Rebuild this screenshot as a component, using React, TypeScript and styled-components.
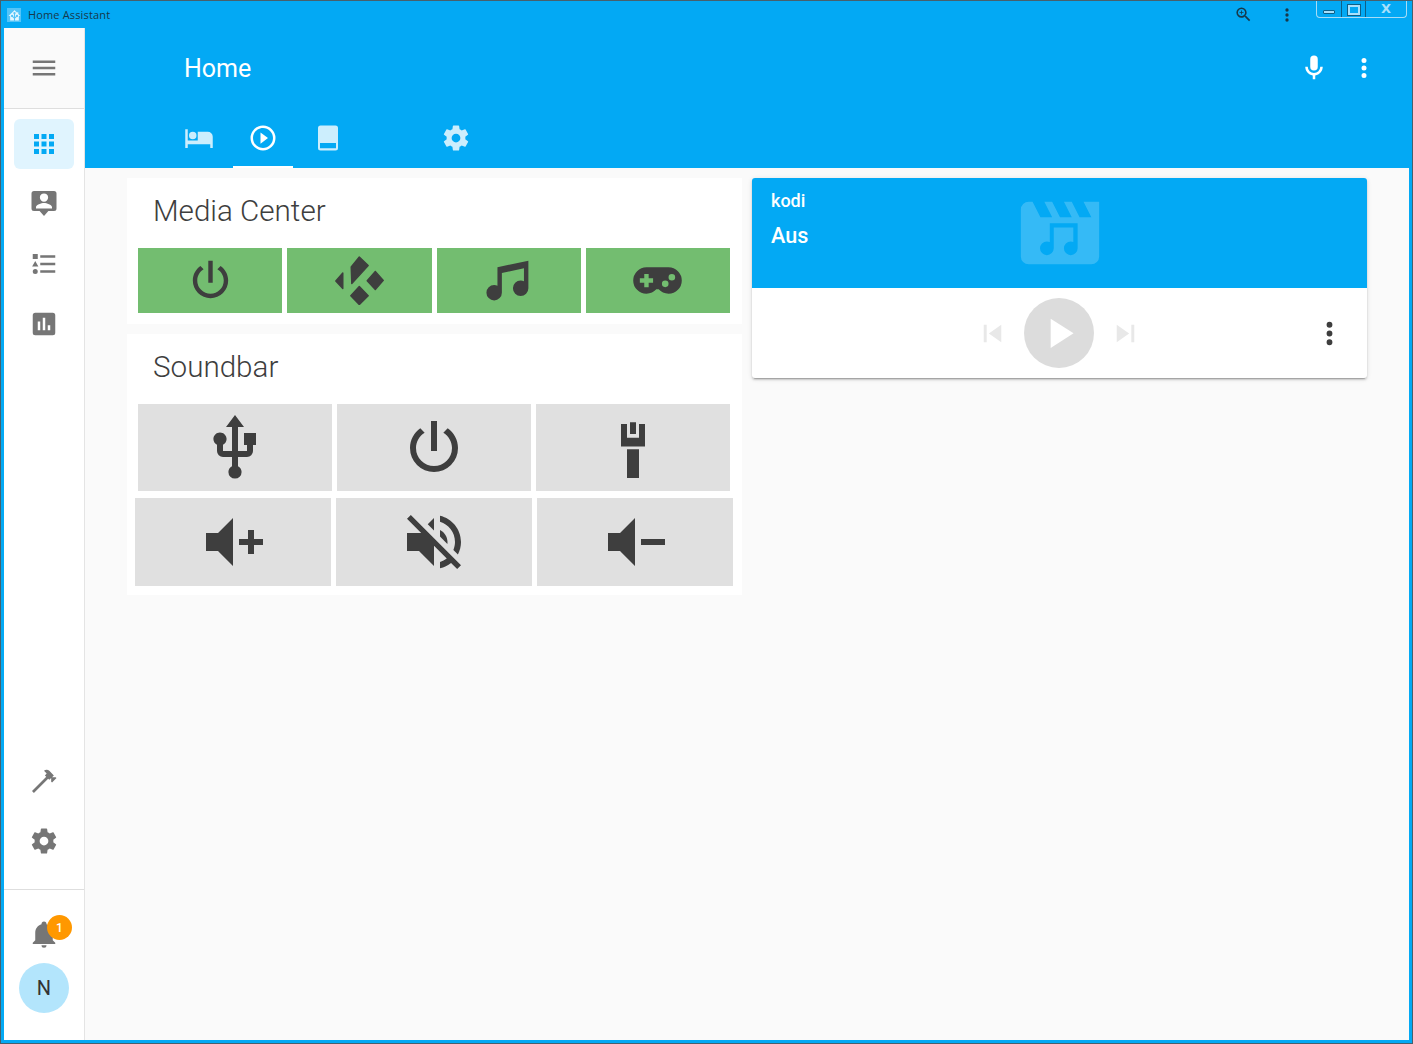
import React from "react";
import styled, { createGlobalStyle } from "styled-components";

const BLUE = "#03a9f4";
const SIDE_ICON = "#767676";

const mdi = {
  menu: "M3,6H21V8H3V6M3,11H21V13H3V11M3,16H21V18H3V16Z",
  apps: "M16,20H20V16H16M16,14H20V10H16M10,8H14V4H10M16,8H20V4H16M10,14H14V10H10M4,14H8V10H4M4,20H8V16H4M10,20H14V16H10M4,8H8V4H4V8Z",
  logbook:
    "M20,1.5H4A2,2 0 0,0 2,3.5V15.5A2,2 0 0,0 4,17.5H8.5L12,21.6L15.5,17.5H20A2,2 0 0,0 22,15.5V3.5A2,2 0 0,0 20,1.5Z M12,3.5A3.3,3.3 0 0 1 15.3,6.8A3.3,3.3 0 0 1 12,10.1A3.3,3.3 0 0 1 8.7,6.8A3.3,3.3 0 0 1 12,3.5Z M5.6,15.5V14.5C5.6,12.4 9.9,11.1 12,11.1C14.1,11.1 18.4,12.4 18.4,14.5V15.5Z",
  listType:
    "M5,9.5L7.5,14H2.5L5,9.5M3,4H7V8H3V4M5,20A2,2 0 0,0 7,18A2,2 0 0,0 5,16A2,2 0 0,0 3,18A2,2 0 0,0 5,20M9,5V7H21V5H9M9,19H21V17H9V19M9,13H21V11H9V13Z",
  chartBox:
    "M19,3H5A2,2 0 0,0 3,5V19A2,2 0 0,0 5,21H19A2,2 0 0,0 21,19V5A2,2 0 0,0 19,3M9,17H7V10H9V17M13,17H11V7H13V17M17,17H15V13H17V17Z",
  hammer:
    "M2.4,20L13.8,8.6L12.72,7.5L14.14,6.07L12,3.89C13.2,2.7 15.09,2.7 16.27,3.89L19.87,7.5L18.45,8.91H21.29L22,9.62L18.45,13.21L17.74,12.5V9.62L16.27,11.04L15.3,10.1L3.9,21.5Z",
  cog: "M12,15.5A3.5,3.5 0 0,1 8.5,12A3.5,3.5 0 0,1 12,8.5A3.5,3.5 0 0,1 15.5,12A3.5,3.5 0 0,1 12,15.5M19.43,12.97C19.47,12.65 19.5,12.33 19.5,12C19.5,11.67 19.47,11.34 19.43,11L21.54,9.37C21.73,9.22 21.78,8.95 21.66,8.73L19.66,5.27C19.54,5.05 19.27,4.96 19.05,5.05L16.56,6.05C16.04,5.66 15.5,5.32 14.87,5.07L14.5,2.42C14.46,2.18 14.25,2 14,2H10C9.75,2 9.54,2.18 9.5,2.42L9.13,5.07C8.5,5.32 7.96,5.66 7.44,6.05L4.95,5.05C4.73,4.96 4.46,5.05 4.34,5.27L2.34,8.73C2.21,8.95 2.27,9.22 2.46,9.37L4.57,11C4.53,11.34 4.5,11.67 4.5,12C4.5,12.33 4.53,12.65 4.57,12.97L2.46,14.63C2.27,14.78 2.21,15.05 2.34,15.27L4.34,18.73C4.46,18.95 4.73,19.03 4.95,18.95L7.44,17.94C7.96,18.34 8.5,18.68 9.13,18.93L9.5,21.58C9.54,21.82 9.75,22 10,22H14C14.25,22 14.46,21.82 14.5,21.58L14.87,18.93C15.5,18.67 16.04,18.34 16.56,17.94L19.05,18.95C19.27,19.03 19.54,18.95 19.66,18.73L21.66,15.27C21.78,15.05 21.73,14.78 21.54,14.63L19.43,12.97Z",
  bell: "M21,19V20H3V19L5,17V11C5,7.9 7.03,5.17 10,4.29C10,4.19 10,4.1 10,4A2,2 0 0,1 12,2A2,2 0 0,1 14,4C14,4.1 14,4.19 14,4.29C16.97,5.17 19,7.9 19,11V17L21,19M14,21A2,2 0 0,1 12,23A2,2 0 0,1 10,21",
  mic: "M12,2A3,3 0 0,1 15,5V11A3,3 0 0,1 12,14A3,3 0 0,1 9,11V5A3,3 0 0,1 12,2M19,11C19,14.53 16.39,17.44 13,17.93V21H11V17.93C7.61,17.44 5,14.53 5,11H7A5,5 0 0,0 12,16A5,5 0 0,0 17,11H19Z",
  dots: "M12,16A2,2 0 0,1 14,18A2,2 0 0,1 12,20A2,2 0 0,1 10,18A2,2 0 0,1 12,16M12,10A2,2 0 0,1 14,12A2,2 0 0,1 12,14A2,2 0 0,1 10,12A2,2 0 0,1 12,10M12,4A2,2 0 0,1 14,6A2,2 0 0,1 12,8A2,2 0 0,1 10,6A2,2 0 0,1 12,4Z",
  bed: "M19,7H11V14H3V5H1V20H3V17H21V20H23V11A4,4 0 0,0 19,7M7,13A3,3 0 0,0 10,10A3,3 0 0,0 7,7A3,3 0 0,0 4,10A3,3 0 0,0 7,13Z",
  playCircle:
    "M10,16.5L16,12L10,7.5V16.5M12,2A10,10 0 0,0 2,12A10,10 0 0,0 12,22A10,10 0 0,0 22,12A10,10 0 0,0 12,2M12,20C7.59,20 4,16.41 4,12C4,7.59 7.59,4 12,4C16.41,4 20,7.59 20,12C20,16.41 16.41,20 12,20Z",
  book: "M6,2H18A2,2 0 0,1 20,4V20A2,2 0 0,1 18,22H6A2,2 0 0,1 4,20V4A2,2 0 0,1 6,2Z M5.6,16V20.2H18.4V16Z",
  power:
    "M16.56,5.44L15.11,6.89C16.84,7.94 18,9.83 18,12A6,6 0 0,1 12,18A6,6 0 0,1 6,12C6,9.83 7.16,7.94 8.88,6.88L7.44,5.44C5.36,6.88 4,9.28 4,12A8,8 0 0,0 12,20A8,8 0 0,0 20,12C20,9.28 18.64,6.88 16.56,5.44M13,3H11V13H13",
  music:
    "M21,3V15.5A3.5,3.5 0 0,1 17.5,19A3.5,3.5 0 0,1 14,15.5A3.5,3.5 0 0,1 17.5,12C18.04,12 18.55,12.12 19,12.34V6.47L9,8.6V17.5A3.5,3.5 0 0,1 5.5,21A3.5,3.5 0 0,1 2,17.5A3.5,3.5 0 0,1 5.5,14C6.04,14 6.55,14.12 7,14.34V6L21,3Z",
  controller:
    "M7,6H17A6,6 0 0,1 23,12A6,6 0 0,1 17,18C15.22,18 13.63,17.23 12.53,16H11.47C10.37,17.23 8.78,18 7,18A6,6 0 0,1 1,12A6,6 0 0,1 7,6M6,9V11H4V13H6V15H8V13H10V11H8V9H6M15.5,12A1.5,1.5 0 0,0 14,13.5A1.5,1.5 0 0,0 15.5,15A1.5,1.5 0 0,0 17,13.5A1.5,1.5 0 0,0 15.5,12M18.5,9A1.5,1.5 0 0,0 17,10.5A1.5,1.5 0 0,0 18.5,12A1.5,1.5 0 0,0 20,10.5A1.5,1.5 0 0,0 18.5,9Z",
  usb: "M15,7V11H16V13H13V5H15L12,1L9,5H11V13H8V10.93C8.7,10.56 9.2,9.85 9.2,9C9.2,7.78 8.21,6.8 7,6.8C5.78,6.8 4.8,7.78 4.8,9C4.8,9.85 5.3,10.59 6,10.93V13A2,2 0 0,0 8,15H11V18.05C10.29,18.41 9.8,19.15 9.8,20A2.2,2.2 0 0,0 12,22.2A2.2,2.2 0 0,0 14.2,20C14.2,19.15 13.71,18.41 13,18.05V15H16A2,2 0 0,0 18,13V11H19V7H15Z",
  hdmi: "M11,3.4H13V7.3H11Z M8,4H10V8.6H14V4H16V11.5H8Z M10,12.4H14V22H10Z",
  volumePlus: "M3,9H7L12,4V20L7,15H3V9M14,11H17V8H19V11H22V13H19V16H17V13H14V11Z",
  volumeMinus: "M3,9H7L12,4V20L7,15H3V9M14,11H22V13H14V11Z",
  volumeOff:
    "M12,4L9.91,6.09L12,8.18M4.27,3L3,4.27L7.73,9H3V15H7L12,20V13.27L16.25,17.53C15.58,18.04 14.83,18.46 14,18.7V20.77C15.38,20.45 16.63,19.82 17.68,18.96L19.73,21L21,19.73L12,10.73M19,12C19,12.94 18.8,13.82 18.46,14.64L19.97,16.15C20.62,14.91 21,13.5 21,12C21,7.72 18,4.14 14,3.23V5.29C16.89,6.15 19,8.83 19,12M16.5,12C16.5,10.23 15.5,8.71 14,7.97V10.18L16.45,12.63C16.5,12.43 16.5,12.21 16.5,12Z",
  play: "M8,5.14V19.14L19,12.14L8,5.14Z",
  prev: "M6,18V6H8V18H6M9.5,12L18,6V18L9.5,12Z",
  next: "M16,18H18V6H16M6,18L14.5,12L6,6V18Z",
  zoom: "M15.5,14L20.5,19L19,20.5L14,15.5V14.71L13.73,14.43C12.59,15.41 11.11,16 9.5,16A6.5,6.5 0 0,1 3,9.5A6.5,6.5 0 0,1 9.5,3A6.5,6.5 0 0,1 16,9.5C16,11.11 15.41,12.59 14.43,13.73L14.71,14H15.5M9.5,14C12,14 14,12 14,9.5C14,7 12,5 9.5,5C7,5 5,7 5,9.5C5,12 7,14 9.5,14M12,10H10V12H9V10H7V9H9V7H10V9H12V10Z",
  homeAssistant:
    "M21.8,13H20V21H13V17.67L15.79,14.88L16.5,15C17.66,15 18.6,14.06 18.6,12.9C18.6,11.74 17.66,10.8 16.5,10.8A2.1,2.1 0 0,0 14.4,12.9L14.5,13.61L13,15.13V9.65C13.66,9.29 14.1,8.6 14.1,7.8A2.1,2.1 0 0,0 12,5.7A2.1,2.1 0 0,0 9.9,7.8C9.9,8.6 10.34,9.29 11,9.65V15.13L9.5,13.61L9.6,12.9A2.1,2.1 0 0,0 7.5,10.8A2.1,2.1 0 0,0 5.4,12.9A2.1,2.1 0 0,0 7.5,15L8.21,14.88L11,17.67V21H4V13H2.25C1.83,13 1.42,13 1.42,12.79C1.43,12.57 1.85,12.15 2.28,11.72L11,3C11.33,2.67 11.67,2.33 12,2.33C12.33,2.33 12.67,2.67 13,3L17,7V6H19V9L21.78,11.78C22.18,12.18 22.59,12.59 22.6,12.8C22.6,13 22.2,13 21.8,13Z",
  movieMusic:
    "M18,4L20,8H17L15,4H13L15,8H12L10,4H8L10,8H7L5,4H4A2,2 0 0,0 2,6V18A2,2 0 0,0 4,20H20A2,2 0 0,0 22,18V4H18Z M9.4,9.5H16.5V15.9A1.75,1.75 0 0 1 13,15.9A1.75,1.75 0 0 1 14.75,14.15L15.4,14.3V10.6H10.4V15.9A1.75,1.75 0 0 1 6.9,15.9A1.75,1.75 0 0 1 8.65,14.15L9.4,14.3Z",
};

const GlobalStyle = createGlobalStyle`
  html, body {
    margin: 0;
    padding: 0;
    height: 100%;
    overflow: hidden;
  }
  body {
    font-family: Roboto, "Noto Sans", sans-serif;
    color: #212121;
  }
  * {
    box-sizing: border-box;
  }
`;

const Svg = styled.svg<{ $size: number; $color?: string }>`
  display: block;
  flex: none;
  width: ${(p) => p.$size}px;
  height: ${(p) => p.$size}px;
  fill: ${(p) => p.$color || "currentColor"};
`;

const Icon: React.FC<{ d: string; size: number; color?: string }> = ({
  d,
  size,
  color,
}) => (
  <Svg viewBox="0 0 24 24" $size={size} $color={color}>
    <path d={d} fillRule="evenodd" />
  </Svg>
);

const KodiIcon: React.FC = () => (
  <Svg viewBox="0 0 49 49" $size={49}>
    <g stroke="currentColor" strokeWidth="1.4" strokeLinejoin="round">
      <polygon points="16.2,11 24.3,1 33.2,9.6 16.8,27.6" />
      <polygon points="7.8,17 0.8,25 7.8,32.6" />
      <polygon points="40.3,15.4 48.3,24.4 40.3,33.6 32.2,24.7" />
      <polygon points="24.3,30.4 33.2,39.7 24.3,48.6 15.8,39.7" />
    </g>
  </Svg>
);

const Window = styled.div`
  display: flex;
  flex-direction: column;
  width: 1413px;
  height: 1044px;
  padding: 0 3px 3px;
  background: ${BLUE};
  border: 1px solid #47606c;
`;

const TitleBar = styled.div`
  display: flex;
  align-items: center;
  flex: none;
  height: 27px;
  padding: 0 2px 0 3px;
`;

const AppBadge = styled.div`
  display: flex;
  align-items: center;
  justify-content: center;
  width: 14px;
  height: 14px;
  margin-top: 1px;
  background: #53c4f8;
  color: #e6f7ff;
`;

const AppName = styled.span`
  margin-left: 7px;
  font-family: "Open Sans", sans-serif;
  font-size: 11px;
  letter-spacing: 0.15px;
  color: #17384a;
`;

const TitleTools = styled.div`
  display: flex;
  align-items: center;
  gap: 24px;
  margin-left: auto;
  color: #17384a;
`;

const WindowButtons = styled.div`
  display: flex;
  align-self: flex-start;
  height: 17px;
  margin-left: 19px;
  border: 1px solid #a6dcf6;
  border-top: none;
  border-radius: 0 0 4px 4px;
`;

const WindowButton = styled.div<{ $width: number }>`
  display: flex;
  align-items: center;
  justify-content: center;
  width: ${(p) => p.$width}px;
  & + & {
    border-left: 1px solid #0f5f86;
  }
`;

const MinGlyph = styled.div`
  width: 12px;
  height: 4px;
  margin-top: 6px;
  background: #a8e0fb;
  border: 1px solid #0f5f86;
  border-radius: 1px;
`;

const RestoreGlyph = styled.div`
  width: 12px;
  height: 10px;
  margin-top: 1px;
  background: #03a9f4;
  border: 2px solid #a8e0fb;
  outline: 1px solid #0f5f86;
`;

const CloseGlyph = styled.span`
  font-family: "DejaVu Sans", sans-serif;
  font-size: 13px;
  font-weight: 700;
  line-height: 14px;
  color: #a8e0fb;
`;

const Body = styled.div`
  display: flex;
  flex: 1;
  min-height: 0;
`;

const Sidebar = styled.aside`
  display: flex;
  flex-direction: column;
  flex: none;
  width: 81px;
  background: #fff;
  border-right: 1px solid #e4e4e4;
`;

const SidebarTop = styled.div`
  display: flex;
  align-items: center;
  justify-content: center;
  flex: none;
  height: 81px;
  background: #fafafa;
  border-bottom: 1px solid #dedede;
  color: ${SIDE_ICON};
`;

const Nav = styled.nav`
  display: flex;
  flex-direction: column;
  flex: 1;
  gap: 10px;
  padding: 10px 10px 0;
`;

const NavItem = styled.div<{ $active?: boolean }>`
  display: flex;
  align-items: center;
  justify-content: center;
  height: 50px;
  border-radius: 6px;
  color: ${(p) => (p.$active ? BLUE : SIDE_ICON)};
  background: ${(p) => (p.$active ? "#e0f4fe" : "transparent")};
`;

const Tools = styled.div`
  display: flex;
  flex-direction: column;
  gap: 10px;
  padding: 0 10px 23px;
`;

const UserArea = styled.div`
  display: flex;
  flex-direction: column;
  align-items: center;
  flex: none;
  height: 151px;
  padding-top: 19px;
  gap: 4px;
  border-top: 1px solid #dedede;
`;

const BellItem = styled.div`
  position: relative;
  display: flex;
  align-items: center;
  justify-content: center;
  width: 60px;
  height: 50px;
  color: ${SIDE_ICON};
`;

const Badge = styled.div`
  position: absolute;
  left: 33px;
  top: 6px;
  display: flex;
  align-items: center;
  justify-content: center;
  width: 25px;
  height: 25px;
  border-radius: 50%;
  background: #ff9800;
  color: #fff;
  font-size: 12px;
  font-weight: 500;
`;

const Avatar = styled.div`
  display: flex;
  align-items: center;
  justify-content: center;
  width: 50px;
  height: 50px;
  border-radius: 50%;
  background: #b3e5fc;
  color: #333;
  font-size: 20px;
`;

const Main = styled.main`
  display: flex;
  flex-direction: column;
  flex: 1;
  min-width: 0;
  background: #fafafa;
`;

const Header = styled.header`
  flex: none;
  height: 140px;
  background: ${BLUE};
  color: #fff;
`;

const Toolbar = styled.div`
  display: flex;
  align-items: center;
  height: 80px;
  padding: 0 20px 0 99px;
`;

const Title = styled.h1`
  flex: 1;
  margin: 0;
  font-size: 25px;
  font-weight: 400;
`;

const HeaderButton = styled.div`
  display: flex;
  align-items: center;
  justify-content: center;
  width: 50px;
  height: 50px;
`;

const Tabs = styled.div`
  display: flex;
  gap: 4.33px;
  height: 60px;
  padding-left: 84px;
`;

const Tab = styled.div<{ $active?: boolean }>`
  display: flex;
  align-items: center;
  justify-content: center;
  width: 60px;
  border-bottom: 2px solid ${(p) => (p.$active ? "#fff" : "transparent")};
  padding-top: 2px;
  color: ${(p) => (p.$active ? "#fff" : "rgba(255, 255, 255, 0.8)")};
`;

const Content = styled.div`
  display: grid;
  grid-template-columns: 615px 615px;
  align-items: start;
  gap: 10px;
  padding: 10px 42px 0;
`;

const Column = styled.div`
  display: flex;
  flex-direction: column;
  gap: 10px;
`;

const Card = styled.section`
  padding: 0 12px 0 11px;
  background: #fff;
`;

const CardTitle = styled.h2`
  display: flex;
  align-items: center;
  height: 70px;
  margin: 0;
  padding: 0 0 4px 15px;
  font-size: 29.6px;
  font-weight: 300;
  color: #3e3e3e;
`;

const ButtonRow = styled.div<{ $bleed?: boolean; $bottom?: number }>`
  display: flex;
  gap: 5px;
  margin: ${(p) => (p.$bleed ? "0 -3px" : "0")};
  padding-bottom: ${(p) => p.$bottom ?? 0}px;
  & + & {
    margin-top: 7px;
  }
`;

const SwitchButton = styled.div<{ $on?: boolean; $height: number }>`
  display: flex;
  align-items: center;
  justify-content: center;
  flex: 1 1 0;
  height: ${(p) => p.$height}px;
  background: ${(p) => (p.$on ? "#73bd70" : "#e0e0e0")};
  color: #3e3e3e;
`;

const Player = styled.section`
  overflow: hidden;
  background: #fff;
  border-radius: 3px;
  box-shadow: 0 2px 2px rgba(0, 0, 0, 0.14), 0 1px 5px rgba(0, 0, 0, 0.12),
    0 3px 1px -2px rgba(0, 0, 0, 0.2);
`;

const PlayerHead = styled.div`
  position: relative;
  height: 110px;
  padding: 11px 19px 0;
  background: ${BLUE};
  color: #fff;
`;

const PlayerArt = styled.div`
  position: absolute;
  inset: 0;
  display: flex;
  align-items: center;
  justify-content: center;
`;

const PlayerName = styled.div`
  position: relative;
  font-size: 18px;
  font-weight: 500;
  line-height: 24px;
`;

const PlayerState = styled.div`
  position: relative;
  margin-top: 11px;
  font-size: 21.6px;
  font-weight: 500;
  line-height: 24px;
`;

const PlayerControls = styled.div`
  display: grid;
  grid-template-columns: 1fr auto 1fr;
  align-items: center;
  height: 90px;
`;

const Transport = styled.div`
  display: flex;
  align-items: center;
  gap: 14px;
  grid-column: 2;
  margin-left: -1px;
  color: #e8e8e8;
`;

const PlayButton = styled.div`
  display: flex;
  align-items: center;
  justify-content: center;
  width: 70px;
  height: 70px;
  border-radius: 50%;
  background: #dcdcdc;
  color: #fff;
`;

const MoreButton = styled.div`
  justify-self: end;
  margin-right: 20px;
  color: #3e3e3e;
`;

const navItems = [mdi.apps, mdi.logbook, mdi.listType, mdi.chartBox];
const tabs = [mdi.bed, mdi.playCircle, mdi.book, "", mdi.cog];

export default function App() {
  return (
    <>
      <GlobalStyle />
      <Window>
        <TitleBar>
          <AppBadge>
            <Icon d={mdi.homeAssistant} size={13} />
          </AppBadge>
          <AppName>Home Assistant</AppName>
          <TitleTools>
            <Icon d={mdi.zoom} size={19} />
            <Icon d={mdi.dots} size={20} />
          </TitleTools>
          <WindowButtons>
            <WindowButton $width={24}>
              <MinGlyph />
            </WindowButton>
            <WindowButton $width={24}>
              <RestoreGlyph />
            </WindowButton>
            <WindowButton $width={41}>
              <CloseGlyph>X</CloseGlyph>
            </WindowButton>
          </WindowButtons>
        </TitleBar>
        <Body>
          <Sidebar>
            <SidebarTop>
              <Icon d={mdi.menu} size={30} />
            </SidebarTop>
            <Nav>
              {navItems.map((d, i) => (
                <NavItem key={d} $active={i === 0}>
                  <Icon d={d} size={30} />
                </NavItem>
              ))}
            </Nav>
            <Tools>
              <NavItem>
                <Icon d={mdi.hammer} size={30} />
              </NavItem>
              <NavItem>
                <Icon d={mdi.cog} size={30} />
              </NavItem>
            </Tools>
            <UserArea>
              <BellItem>
                <Icon d={mdi.bell} size={30} />
                <Badge>1</Badge>
              </BellItem>
              <Avatar>N</Avatar>
            </UserArea>
          </Sidebar>
          <Main>
            <Header>
              <Toolbar>
                <Title>Home</Title>
                <HeaderButton>
                  <Icon d={mdi.mic} size={30} />
                </HeaderButton>
                <HeaderButton>
                  <Icon d={mdi.dots} size={30} />
                </HeaderButton>
              </Toolbar>
              <Tabs>
                {tabs.map((d, i) => (
                  <Tab key={i} $active={i === 1}>
                    {d && <Icon d={d} size={30} />}
                  </Tab>
                ))}
              </Tabs>
            </Header>
            <Content>
              <Column>
                <Card>
                  <CardTitle>Media Center</CardTitle>
                  <ButtonRow $bottom={11}>
                    <SwitchButton $on $height={65}>
                      <Icon d={mdi.power} size={53} />
                    </SwitchButton>
                    <SwitchButton $on $height={65}>
                      <KodiIcon />
                    </SwitchButton>
                    <SwitchButton $on $height={65}>
                      <Icon d={mdi.music} size={53} />
                    </SwitchButton>
                    <SwitchButton $on $height={65}>
                      <Icon d={mdi.controller} size={53} />
                    </SwitchButton>
                  </ButtonRow>
                </Card>
                <Card>
                  <CardTitle>Soundbar</CardTitle>
                  <ButtonRow>
                    <SwitchButton $height={87}>
                      <Icon d={mdi.usb} size={72} />
                    </SwitchButton>
                    <SwitchButton $height={87}>
                      <Icon d={mdi.power} size={72} />
                    </SwitchButton>
                    <SwitchButton $height={87}>
                      <Icon d={mdi.hdmi} size={72} />
                    </SwitchButton>
                  </ButtonRow>
                  <ButtonRow $bleed $bottom={9}>
                    <SwitchButton $height={88}>
                      <Icon d={mdi.volumePlus} size={72} />
                    </SwitchButton>
                    <SwitchButton $height={88}>
                      <Icon d={mdi.volumeOff} size={72} />
                    </SwitchButton>
                    <SwitchButton $height={88}>
                      <Icon d={mdi.volumeMinus} size={72} />
                    </SwitchButton>
                  </ButtonRow>
                </Card>
              </Column>
              <Player>
                <PlayerHead>
                  <PlayerArt>
                    <Svg viewBox="0 0 24 24" $size={94} $color="rgba(255,255,255,0.2)">
                      <path d={mdi.movieMusic} fillRule="evenodd" />
                    </Svg>
                  </PlayerArt>
                  <PlayerName>kodi</PlayerName>
                  <PlayerState>Aus</PlayerState>
                </PlayerHead>
                <PlayerControls>
                  <Transport>
                    <Icon d={mdi.prev} size={35} />
                    <PlayButton>
                      <Icon d={mdi.play} size={50} />
                    </PlayButton>
                    <Icon d={mdi.next} size={35} />
                  </Transport>
                  <MoreButton>
                    <Icon d={mdi.dots} size={35} />
                  </MoreButton>
                </PlayerControls>
              </Player>
            </Content>
          </Main>
        </Body>
      </Window>
    </>
  );
}
